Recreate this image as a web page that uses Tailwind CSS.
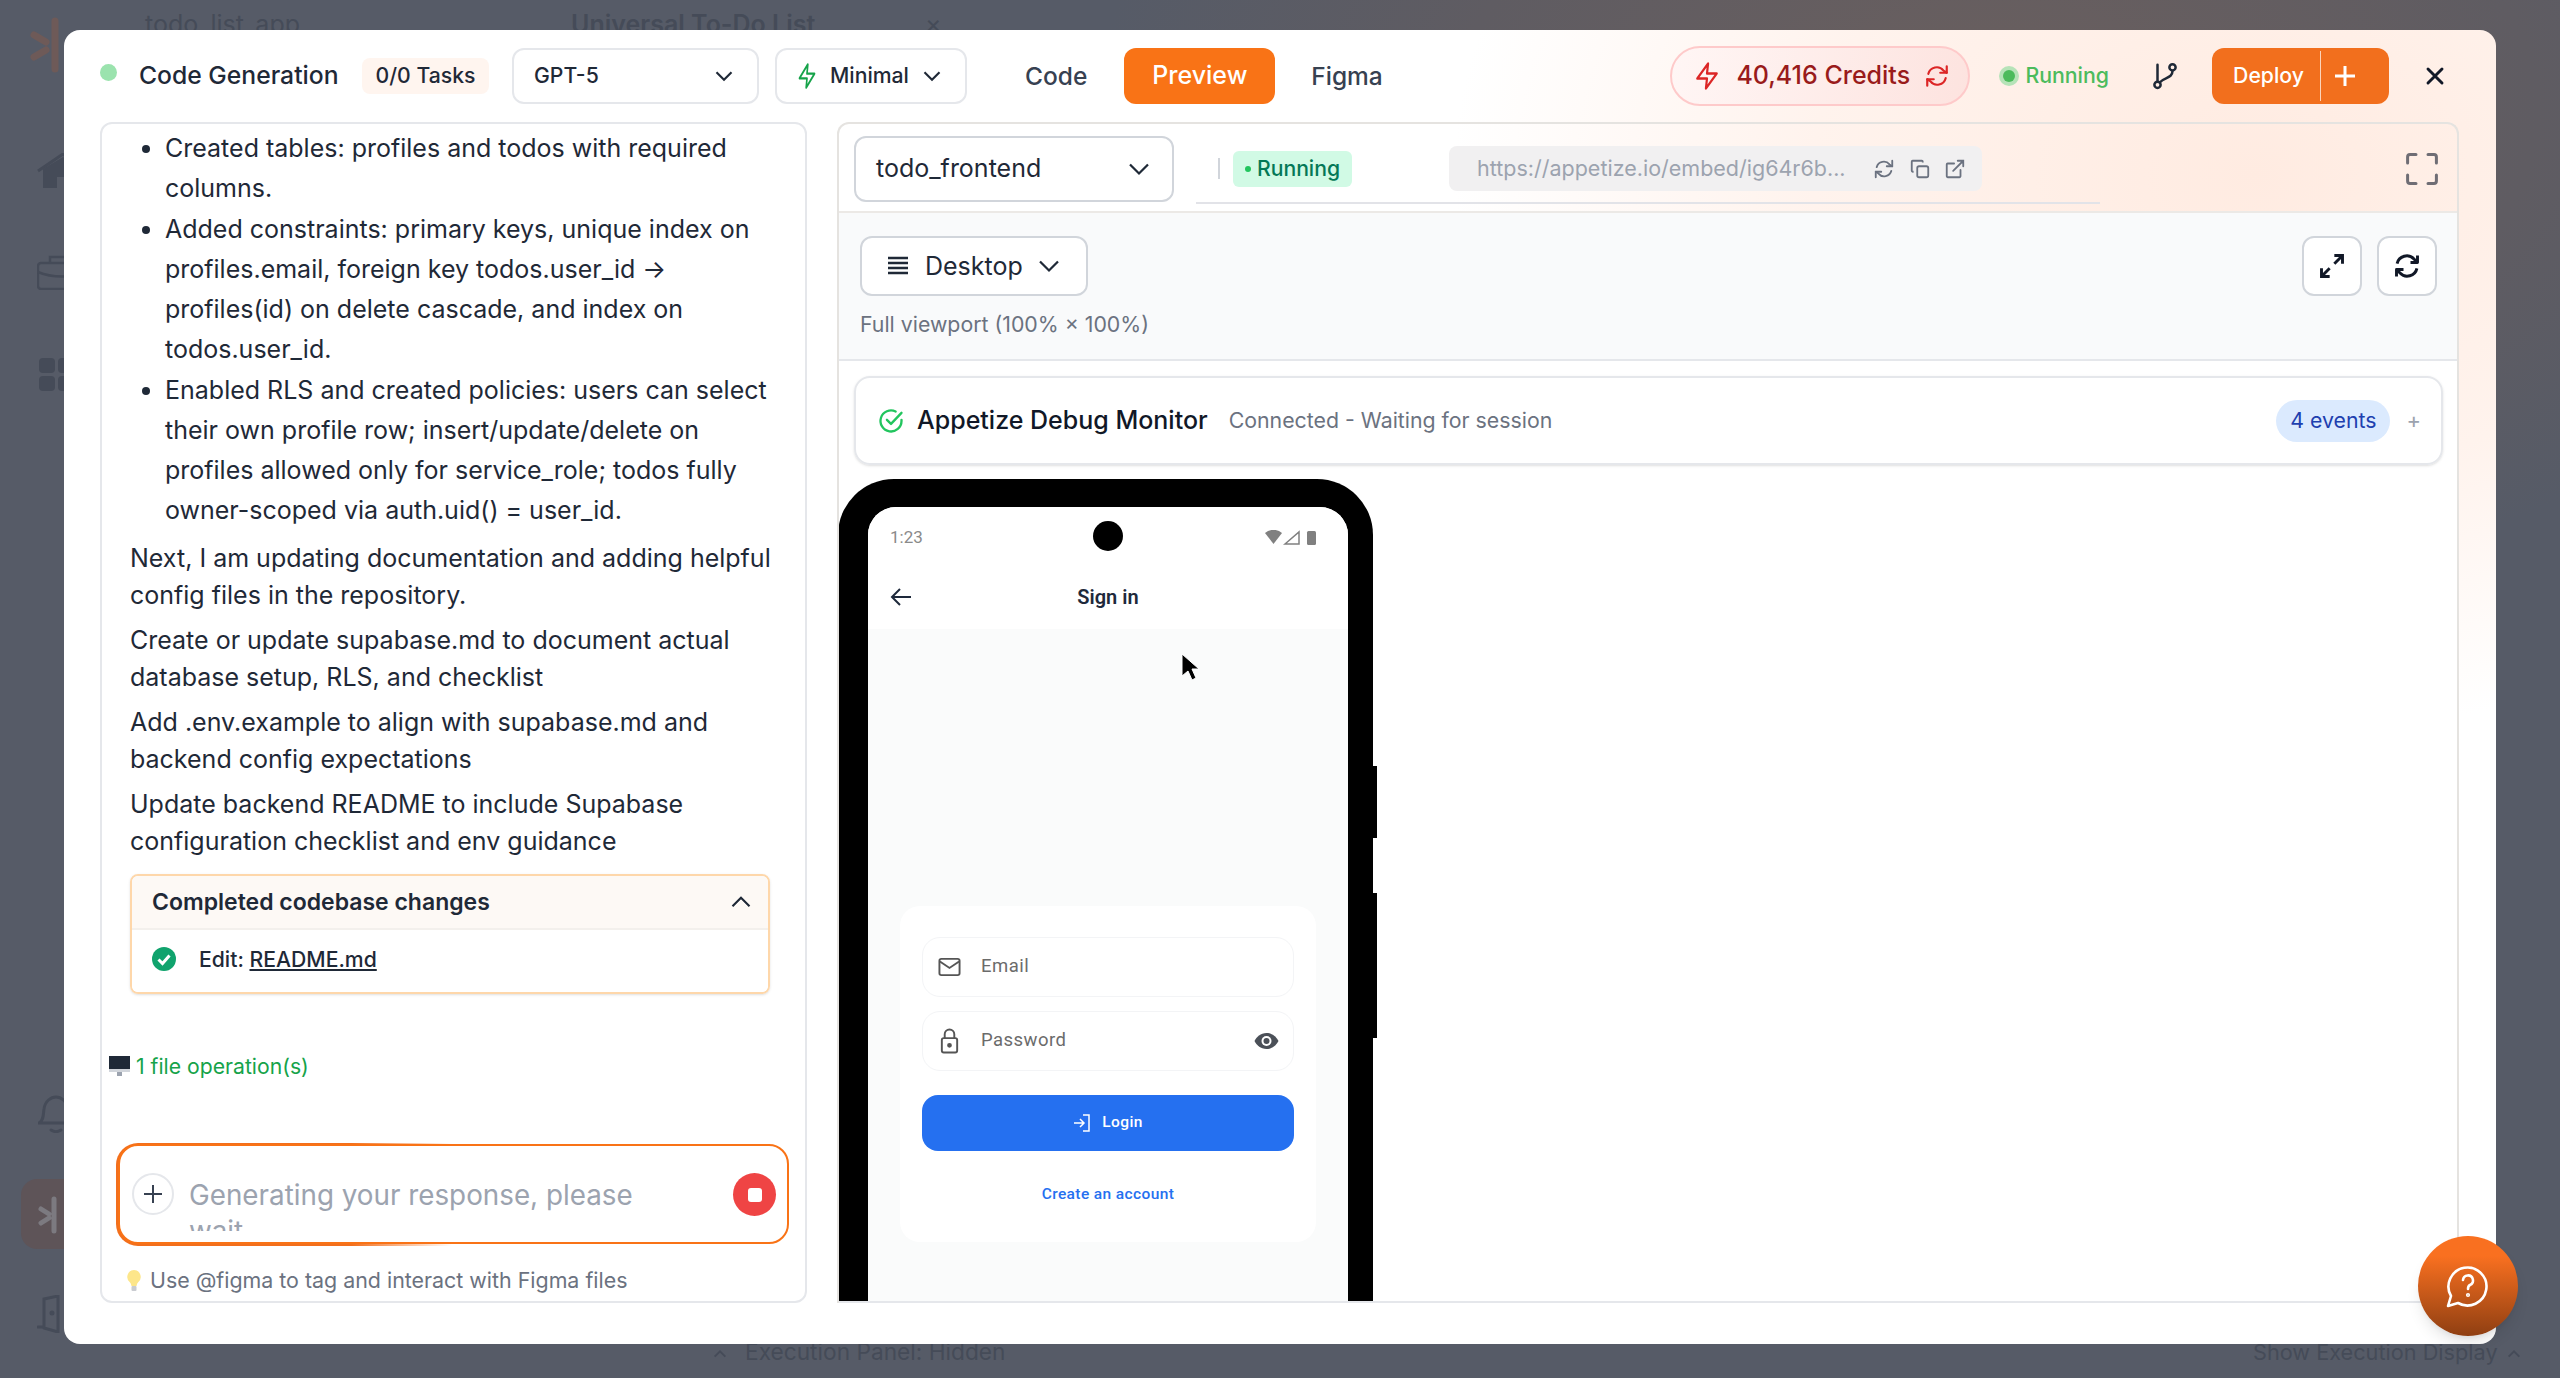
<!DOCTYPE html>
<html lang="en">
<head>
<meta charset="UTF-8">
<title>Code Generation</title>
<script src="https://cdn.jsdelivr.net/npm/@tailwindcss/browser@4"></script>
</head>
<body class="bg-[#565b67] font-['Inter',sans-serif] overflow-hidden">
<div class="relative h-[1378px] w-[2560px] overflow-hidden bg-[radial-gradient(ellipse_900px_500px_at_78%_8%,#6a5f5e_0%,#5f5c62_60%,#565b67_100%)]">

  <!-- dimmed page behind the modal -->
  <div class="absolute left-[145px] top-[6px] text-[25px] text-[#454b58]">todo_list_app</div>
  <div class="absolute left-[571px] top-[6px] text-[25px] font-semibold text-[#454b58]">Universal To-Do List</div>
  <div class="absolute left-[925px] top-[6px] text-[25px] text-[#454b58]">×</div>
  <svg class="absolute left-[30px] top-[17px] h-[56px] w-[50px]" viewBox="0 0 50 56" fill="none" stroke="#6e5a58" stroke-width="7" stroke-linecap="round"><path d="M25 4v48M4 18l12 7M4 40l12-7"/></svg>
  <svg class="absolute left-[37px] top-[153px] h-[35px] w-[50px]" viewBox="0 0 50 35" fill="none"><path d="M1 18L26 1l23 17" stroke="#454b58" stroke-width="3"/><path d="M6 16L26 4l18 12v19H31V24H20v11H6z" fill="#454b58"/></svg>
  <svg class="absolute left-[37px] top-[255px] h-[35px] w-[50px]" viewBox="0 0 50 35" fill="none" stroke="#454b58" stroke-width="2.5"><rect x="1" y="8" width="48" height="26" rx="3"/><path d="M13 8V2h24v6M1 17c14 6 34 6 48 0"/></svg>
  <div class="absolute left-[39px] top-[358px] grid w-[34px] grid-cols-2 gap-[3px]">
    <div class="h-[15px] rounded-sm bg-[#454b58]"></div><div class="h-[15px] rounded-sm bg-[#454b58]"></div><div class="h-[15px] rounded-sm bg-[#454b58]"></div><div class="h-[15px] rounded-sm bg-[#454b58]"></div>
  </div>
  <svg class="absolute left-[38px] top-[1095px] h-[38px] w-[40px]" viewBox="0 0 40 38" fill="none" stroke="#454b58" stroke-width="3" stroke-linecap="round"><path d="M1 28c5-3 4-8 5-14C7 6 13 2 18 2s11 4 12 12c1 6 0 11 5 14z"/><path d="M13 35c3 2 7 2 10 0"/></svg>
  <div class="absolute left-[21px] top-[1179px] h-[70px] w-[43px] rounded-l-2xl bg-[#5e5458]">
    <svg class="absolute left-[17px] top-[17px] h-[38px] w-[26px]" viewBox="0 0 26 38" fill="none" stroke="#7c7a80" stroke-width="5" stroke-linecap="round"><path d="M16 3v32M3 13l8 5M3 27l8-5"/></svg>
  </div>
  <svg class="absolute left-[37px] top-[1295px] h-[38px] w-[30px]" viewBox="0 0 30 38" fill="none" stroke="#454b58" stroke-width="3" stroke-linecap="round"><path d="M1 32h6V4l14-3v36L7 33"/><circle cx="15" cy="18" r="1" fill="#454b58"/></svg>
  <svg class="absolute left-[712px] top-[1346px] h-[16px] w-[16px]" viewBox="0 0 24 24" fill="none" stroke="#454b58" stroke-width="3"><path d="M4 16l8-8 8 8"/></svg>
  <div class="absolute bottom-[9px] left-[745px] text-[22.7px] text-[#454b58]">Execution Panel: Hidden</div>
  <div class="absolute bottom-[9px] left-[2253px] text-[21.7px] text-[#454b58]">Show Execution Display</div>
  <svg class="absolute left-[2506px] top-[1346px] h-[16px] w-[16px]" viewBox="0 0 24 24" fill="none" stroke="#454b58" stroke-width="3"><path d="M4 16l8-8 8 8"/></svg>

  <!-- modal -->
  <div class="absolute left-[64px] top-[30px] flex h-[1314px] w-[2432px] flex-col rounded-2xl bg-[radial-gradient(ellipse_800px_560px_at_90%_11%,#ffebe1_0%,#fff3ed_55%,#ffffff_100%)] pl-[36px] pr-[37px]">

    <!-- top bar -->
    <div class="flex h-[92px] shrink-0 items-center text-[#1f2937]">
      <span class="mr-[22px] mb-[8px] h-[17px] w-[17px] rounded-full bg-[#9be3ae]"></span>
      <span class="w-[201px] text-[24.7px] font-medium whitespace-nowrap">Code Generation</span>
      <span class="ml-[22px] flex h-[36px] w-[127px] items-center justify-center rounded-lg bg-[#fff5ef] text-[21.2px] font-medium">0/0 Tasks</span>
      <div class="ml-[23px] flex h-[56px] w-[247px] items-center justify-between rounded-xl border-2 border-[#e5e7eb] bg-white pl-[20px] pr-[18px] text-[21.2px] font-medium">GPT-5
        <svg class="h-[30px] w-[30px]" viewBox="0 0 24 24" fill="none" stroke="#1f2937" stroke-width="1.7"><path d="M6 9l6 6 6-6"/></svg>
      </div>
      <div class="ml-[16px] flex h-[56px] w-[192px] items-center rounded-xl border-2 border-[#e5e7eb] bg-white pl-[20px] text-[21.2px] font-medium">
        <svg class="mr-[13px] h-[28px] w-[20px]" viewBox="0 0 24 24" preserveAspectRatio="none" fill="none" stroke="#16a34a" stroke-width="2" stroke-linejoin="round"><path d="M13 2L3 14h9l-1 8 10-12h-9l1-8z"/></svg>
        Minimal
        <svg class="ml-[8px] h-[30px] w-[30px]" viewBox="0 0 24 24" fill="none" stroke="#1f2937" stroke-width="1.7"><path d="M6 9l6 6 6-6"/></svg>
      </div>
      <span class="ml-[58px] text-[24.5px] font-medium text-[#374151]">Code</span>
      <span class="ml-[37px] flex h-[56px] w-[151px] items-center justify-center rounded-xl bg-[#f97316] text-[25px] font-medium text-white">Preview</span>
      <span class="ml-[36px] text-[24.5px] font-medium text-[#374151]">Figma</span>
      <div class="ml-auto flex h-[60px] w-[300px] items-center rounded-full border-2 border-[#fecaca] bg-[linear-gradient(100deg,#fff6f5,#fde3df)] pl-[22px] text-[25px] font-medium text-[#991b1b]">
        <svg class="h-[30px] w-[26px]" viewBox="0 0 24 24" preserveAspectRatio="none" fill="none" stroke="#dc2626" stroke-width="2" stroke-linejoin="round"><path d="M13 2L3 14h9l-1 8 10-12h-9l1-8z"/></svg>
        <span class="ml-[16px] whitespace-nowrap">40,416 Credits</span>
        <svg class="ml-[14px] h-[26px] w-[26px]" viewBox="0 0 24 24" fill="none" stroke="#dc2626" stroke-width="2" stroke-linecap="round" stroke-linejoin="round"><path d="M21 3v6h-6M3 21v-6h6"/><path d="M4 10a8 8 0 0 1 14-3l3 2M20 14a8 8 0 0 1-14 3l-3-2"/></svg>
      </div>
      <span class="ml-[29px] flex h-[20px] w-[20px] items-center justify-center rounded-full bg-[#b6e3b8]"><span class="h-[12px] w-[12px] rounded-full bg-[#4cbb5c]"></span></span>
      <span class="ml-[6px] text-[21.3px] font-medium text-[#4cbb5c]">Running</span>
      <svg class="ml-[41px] h-[30px] w-[30px]" viewBox="0 0 24 24" fill="none" stroke="#1f2937" stroke-width="2" stroke-linecap="round"><circle cx="6" cy="19" r="2.5"/><circle cx="18" cy="5" r="2.5"/><path d="M6 16V3M18 8c0 6-7 5-10 9"/></svg>
      <div class="ml-[32px] flex h-[56px] w-[177px] items-center rounded-xl bg-[#f26f1d] text-white">
        <span class="w-[108px] pl-[5px] text-center text-[21.2px] font-medium">Deploy</span>
        <span class="h-[50px] w-px bg-white/70"></span>
        <span class="pl-[13px]"><svg class="h-[22px] w-[22px]" viewBox="0 0 22 22" stroke="#fff" stroke-width="3"><path d="M11 1v20M1 11h20"/></svg></span>
      </div>
      <svg class="ml-[32px] mr-[10px] h-[28px] w-[28px]" viewBox="0 0 24 24" fill="none" stroke="#111827" stroke-width="2.5" stroke-linecap="round"><path d="M6 6l12 12M18 6L6 18"/></svg>
    </div>

    <!-- two panels -->
    <div class="flex min-h-0 flex-1 gap-[30px] pb-[41px]">

      <!-- chat -->
      <div class="flex w-[707px] shrink-0 flex-col rounded-xl border-2 border-[#e5e7eb] bg-white pl-[28px] text-[25px] leading-[40px] text-[#1f2937]">
        <ul class="mt-[4px] list-disc pl-[35px] pr-[30px] marker:text-[#1f2937]">
          <li>Created tables: profiles and todos with required columns.</li>
          <li class="mt-[1px]">Added constraints: primary keys, unique index on profiles.email, foreign key todos.user_id → profiles(id) on delete cascade, and index on todos.user_id.</li>
          <li class="mt-[1px]">Enabled RLS and created policies: users can select their own profile row; insert/update/delete on profiles allowed only for service_role; todos fully owner-scoped via auth.uid() = user_id.</li>
        </ul>
        <p class="mt-[10px] pr-[30px] leading-[37px]">Next, I am updating documentation and adding helpful config files in the repository.</p>
        <p class="mt-[8px] pr-[30px] leading-[37px]">Create or update supabase.md to document actual database setup, RLS, and checklist</p>
        <p class="mt-[8px] pr-[30px] leading-[37px]">Add .env.example to align with supabase.md and backend config expectations</p>
        <p class="mt-[8px] pr-[30px] leading-[37px]">Update backend README to include Supabase configuration checklist and env guidance</p>

        <div class="mt-[14px] mr-[35px] overflow-hidden rounded-lg border-2 border-[#fed7aa] shadow-sm">
          <div class="flex h-[54px] items-center justify-between border-b-2 border-[#f3f0ec] bg-[#fdf9f5] pl-[20px] pr-[10px] text-[23px] font-semibold">Completed codebase changes
            <svg class="h-[34px] w-[34px]" viewBox="0 0 24 24" fill="none" stroke="#1f2937" stroke-width="1.5"><path d="M6 15l6-6 6 6"/></svg>
          </div>
          <div class="flex h-[62px] items-center bg-white px-[20px] pb-[5px] text-[21.2px] font-medium">
            <svg class="mr-[23px] h-[24px] w-[24px]" viewBox="0 0 24 24"><circle cx="12" cy="12" r="12" fill="#10a36d"/><path d="M6.5 12.5l4 4 7-8" fill="none" stroke="#fff" stroke-width="3"/></svg>
            Edit:&nbsp;<span class="underline underline-offset-2">README.md</span>
          </div>
        </div>

        <div class="mt-[56px] -ml-[21px] flex items-center text-[21.2px] leading-[32px] text-[#16a34a]">
          <svg class="mr-[6px] h-[20px] w-[21px]" viewBox="0 0 21 20"><rect width="21" height="13" fill="#1f2937"/><rect y="13" width="21" height="3" fill="#d1d5db"/><rect x="8" y="16" width="5" height="4" fill="#9ca3af"/></svg>
          1 file operation(s)
        </div>

        <div class="relative mt-[62px] -ml-[12px] mr-[16px] h-[100px]">
          <span class="absolute -bottom-[2px] -left-[2px] -top-[1px] w-[50%] rounded-l-[22px] bg-[linear-gradient(90deg,#f26f1d_70%,#f26f1d00)]"></span>
          <div class="relative flex h-[100px] rounded-[20px] border-2 border-[#f97316] bg-white">
            <span class="ml-[12px] mt-[27px] flex h-[42px] w-[42px] shrink-0 items-center justify-center rounded-full border-2 border-[#e5e7eb] text-[#374151]">
              <svg class="h-[24px] w-[24px]" viewBox="0 0 24 24" fill="none" stroke="currentColor" stroke-width="2"><path d="M12 3v18M3 12h18"/></svg>
            </span>
            <div class="ml-[15px] mt-[31px] h-[54px] w-[460px] overflow-hidden text-[27.8px] leading-[36px] text-[#9ca3af]">Generating your response, please wait</div>
            <span class="absolute right-[11px] top-[27px] flex h-[43px] w-[43px] items-center justify-center rounded-full bg-[#ef4444]"><span class="h-[14px] w-[14px] rounded-[3px] bg-white"></span></span>
          </div>
        </div>

        <div class="mt-[20px] -ml-[3px] flex items-center text-[21.4px] leading-[32px] text-[#6b7280]">
          <svg class="mr-[9px] h-[21px] w-[14px]" viewBox="0 0 14 21"><path d="M7 0a7 7 0 0 0-4 12.5c1 1 1 2 1.500 3.500h5c.5-1.500.5-2.500 1.500-3.500A7 7 0 0 0 7 0z" fill="#fde68a"/><rect x="4.500" y="16" width="5" height="5" rx="1" fill="#c9ccd1"/></svg>
          Use @figma to tag and interact with Figma files
        </div>
      </div>

      <!-- preview -->
      <div class="flex min-w-0 flex-1 flex-col overflow-hidden rounded-t-xl border-x-2 border-t-2 border-[#e5e3e0]">
        <div class="flex h-[89px] shrink-0 items-center border-b-2 border-[#ece9e6] pl-[15px] pr-[17px] pt-[2px]">
          <div class="flex h-[66px] w-[320px] shrink-0 items-center justify-between rounded-xl border-2 border-[#d1d5db] bg-white pl-[20px] pr-[15px] text-[25px] text-[#1f2937]">todo_frontend
            <svg class="h-[36px] w-[36px]" viewBox="0 0 24 24" fill="none" stroke="#1f2937" stroke-width="1.5"><path d="M6 9l6 6 6-6"/></svg>
          </div>
          <div class="relative flex h-full flex-1 items-center">
            <span class="ml-[44px] h-[21px] w-[2px] bg-[#d1d5db]"></span>
            <span class="ml-[13px] flex h-[36px] w-[119px] items-center justify-center gap-[6px] rounded-md bg-[#d1fae5] text-[21.2px] font-medium text-[#047857]"><span class="h-[6px] w-[6px] rounded-full bg-[#22c55e]"></span>Running</span>
            <div class="ml-[97px] flex h-[45px] w-[533px] items-center rounded-lg bg-[#f1f0f1] pl-[28px] text-[21.5px] text-[#9ca3af] whitespace-nowrap">https://appetize.io/embed/ig64r6b...
              <svg class="ml-[27px] h-[22px] w-[22px] shrink-0" viewBox="0 0 24 24" fill="none" stroke="#6b7280" stroke-width="2" stroke-linecap="round" stroke-linejoin="round"><path d="M21 3v6h-6M3 21v-6h6"/><path d="M4 10a8 8 0 0 1 14-3l3 2M20 14a8 8 0 0 1-14 3l-3-2"/></svg>
              <svg class="ml-[14px] h-[22px] w-[22px] shrink-0" viewBox="0 0 24 24" fill="none" stroke="#6b7280" stroke-width="2"><rect x="9" y="9" width="12" height="12" rx="2"/><path d="M5 15H4a1 1 0 0 1-1-1V4a1 1 0 0 1 1-1h10a1 1 0 0 1 1 1v1"/></svg>
              <svg class="ml-[13px] h-[22px] w-[22px] shrink-0" viewBox="0 0 24 24" fill="none" stroke="#6b7280" stroke-width="2" stroke-linecap="round"><path d="M18 13v7a1 1 0 0 1-1 1H4a1 1 0 0 1-1-1V7a1 1 0 0 1 1-1h7M15 3h6v6M10 14L21 3"/></svg>
            </div>
            <span class="absolute bottom-[7px] left-[22px] h-[2px] w-[904px] bg-[#e2e3e8]"></span>
            <svg class="ml-auto h-[36px] w-[36px]" viewBox="0 0 30 30" fill="none" stroke="#6f6d74" stroke-width="2.500" stroke-linecap="round" stroke-linejoin="round"><path d="M3 10V5a2 2 0 0 1 2-2h5M20 3h5a2 2 0 0 1 2 2v5M27 20v5a2 2 0 0 1-2 2h-5M10 27H5a2 2 0 0 1-2-2v-5"/></svg>
          </div>
        </div>

        <div class="flex h-[148px] shrink-0 justify-between border-b-2 border-[#e5e7eb] bg-[#f9fafb] pl-[21px] pr-[20px] pt-[23px]">
          <div>
            <div class="flex h-[60px] w-[228px] items-center rounded-xl border-2 border-[#d1d5db] bg-white pl-[24px] text-[25px] text-[#1f2937]">
              <svg class="mr-[15px] h-[20px] w-[24px]" viewBox="0 0 24 20" stroke="#1f2937" stroke-width="2.500"><path d="M2 2h20M2 7h20M2 12h20M2 17h20"/></svg>
              <span class="pt-[2px]">Desktop</span>
              <svg class="ml-[8px] h-[36px] w-[36px]" viewBox="0 0 24 24" fill="none" stroke="#1f2937" stroke-width="1.5"><path d="M6 9l6 6 6-6"/></svg>
            </div>
            <div class="mt-[13px] text-[21.3px] text-[#6b7280]">Full viewport (100% × 100%)</div>
          </div>
          <div class="flex gap-[15px]">
            <span class="flex h-[60px] w-[60px] items-center justify-center rounded-xl border-2 border-[#d1d5db] bg-white">
              <svg class="h-[28px] w-[28px]" viewBox="0 0 24 24" fill="none" stroke="#111827" stroke-width="2.500"><path d="M14 3h7v7M21 3l-7 7M10 21H3v-7M3 21l7-7"/></svg>
            </span>
            <span class="flex h-[60px] w-[60px] items-center justify-center rounded-xl border-2 border-[#d1d5db] bg-white">
              <svg class="h-[28px] w-[28px]" viewBox="0 0 24 24" fill="none" stroke="#111827" stroke-width="2.500" stroke-linejoin="round"><path d="M21 3v6h-6M3 21v-6h6"/><path d="M3.500 10A8.500 8.500 0 0 1 18 6l3 3M20.500 14A8.500 8.500 0 0 1 6 18l-3-3"/></svg>
            </span>
          </div>
        </div>

        <div class="flex min-h-0 flex-1 flex-col bg-white">
          <div class="ml-[15px] mr-[14px] mt-[15px] flex h-[89px] shrink-0 items-center rounded-2xl border-2 border-[#e5e7eb] pl-[21px] pr-[20px] shadow-sm">
            <svg class="h-[28px] w-[28px]" viewBox="0 0 24 24" fill="none" stroke="#22c55e" stroke-width="2" stroke-linecap="round" stroke-linejoin="round"><path d="M21 11v1a9 9 0 1 1-5-8.100"/><path d="M8.500 11l3.500 3.500L21 5"/></svg>
            <span class="ml-[12px] text-[25px] font-medium text-[#111827]">Appetize Debug Monitor</span>
            <span class="ml-[21px] text-[21.3px] text-[#6b7280]">Connected - Waiting for session</span>
            <span class="ml-auto flex h-[42px] w-[114px] items-center justify-center rounded-full bg-[#dbeafe] text-[21.3px] text-[#1e40af]">4 events</span>
            <span class="ml-[16px] text-[22px] text-[#9ca3af]">+</span>
          </div>

          <!-- phone -->
          <div class="mt-[14px] min-h-0 flex-1 overflow-hidden">
            <div class="relative -ml-[1px] h-[900px] w-[535px] rounded-t-[56px] bg-black pl-[30px] pr-[25px] pt-[28px]">
              <span class="absolute -right-[4px] top-[287px] h-[72px] w-[4px] bg-black"></span>
              <span class="absolute -right-[4px] top-[414px] h-[145px] w-[4px] bg-black"></span>
              <div class="flex h-[900px] flex-col overflow-hidden rounded-t-[28px] bg-[#fafbfb]">
                <div class="h-[122px] shrink-0 bg-white">
                  <div class="relative flex h-[58px] items-center justify-between pl-[22px] pr-[32px] pt-[3px] font-['Roboto',sans-serif] text-[17px] text-[#8a8a8a]">
                    1:23
                    <span class="absolute left-[225px] top-[14px] h-[30px] w-[30px] rounded-full bg-black"></span>
                    <svg class="h-[15px] w-[51px]" viewBox="0 0 51 15"><path d="M0 3a13 13 0 0 1 17 0l-8.500 11z" fill="#808080"/><path d="M20 14L34 2v12z" fill="none" stroke="#808080" stroke-width="1.500"/><rect x="42" y="1" width="9" height="14" rx="1.500" fill="#808080"/></svg>
                  </div>
                  <div class="relative flex h-[64px] items-center justify-center font-['Roboto',sans-serif] text-[20px] font-semibold text-[#1e293b]">
                    <svg class="absolute left-[21px] h-[24px] w-[24px]" viewBox="0 0 24 24" fill="none" stroke="#1e293b" stroke-width="2"><path d="M22 12H3M11 4l-8 8 8 8"/></svg>
                    Sign in
                  </div>
                </div>
                <div class="mx-[32px] mt-[277px] h-[336px] rounded-[20px] bg-white px-[22px] pt-[31px] font-['Roboto',sans-serif]">
                  <div class="flex h-[60px] items-center rounded-[18px] border border-[#f3f4f6] pl-[15px] text-[18.5px] tracking-wide text-[#6b6b6b]">
                    <svg class="mr-[20px] h-[18px] w-[23px]" viewBox="0 0 24 20" preserveAspectRatio="none" fill="none" stroke="#555" stroke-width="2"><rect x="1.500" y="1" width="21" height="18" rx="2"/><path d="M2 4l10 7 10-7"/></svg>
                    Email
                  </div>
                  <div class="mt-[14px] flex h-[60px] items-center rounded-[18px] border border-[#f3f4f6] pl-[15px] pr-[14px] text-[18.5px] tracking-wide text-[#6b6b6b]">
                    <svg class="mr-[20px] h-[26px] w-[23px]" viewBox="0 0 24 26" fill="none" stroke="#555" stroke-width="2"><rect x="4" y="10" width="16" height="15" rx="2"/><path d="M7 10V6a5 5 0 0 1 10 0v4"/><circle cx="12" cy="17.500" r="1.500" fill="#555"/></svg>
                    Password
                    <svg class="ml-auto h-[18px] w-[25px]" viewBox="0 0 24 18"><path d="M12 1C6 1 2 5 0 9c2 4 6 8 12 8s10-4 12-8c-2-4-6-8-12-8z" fill="#4b5058"/><circle cx="12" cy="9" r="5" fill="#fff"/><circle cx="12" cy="9" r="3" fill="#4b5058"/></svg>
                  </div>
                  <div class="mt-[24px] flex h-[56px] items-center justify-center gap-[11px] rounded-[16px] bg-[#2570f0] text-[15.5px] font-medium tracking-wide text-white">
                    <svg class="h-[18px] w-[18px]" viewBox="0 0 18 18" fill="none" stroke="#fff" stroke-width="1.500"><path d="M1 9h10M7 5l4 4-4 4M10 1h6v16h-6"/></svg>
                    Login
                  </div>
                  <div class="mt-[32px] text-center text-[15.500px] font-medium tracking-wide text-[#2570f0]">Create an account</div>
                </div>
              </div>
              <svg class="absolute left-[342px] top-[174px] h-[30px] w-[20px]" viewBox="0 0 20 30"><path d="M2 1v22l6-5 4 9 4-2-4-9h7z" fill="#000" stroke="#fff" stroke-width="1"/></svg>
            </div>
          </div>
        </div>
        <div class="h-[2px] shrink-0 bg-[#e5e7eb]"></div>
      </div>
    </div>
  </div>

  <!-- help button -->
  <div class="absolute left-[2418px] top-[1236px] flex h-[100px] w-[100px] items-center justify-center rounded-full bg-[linear-gradient(180deg,#f97020_20%,#8f3f12_100%)] shadow-lg">
    <svg class="h-[44px] w-[44px]" viewBox="0 0 44 44" fill="none" stroke="#fff" stroke-width="2.600" stroke-linecap="round" stroke-linejoin="round"><path d="M2 42l3-10a19 19 0 1 1 7 7z"/><path d="M17 16a5 5 0 1 1 7 5c-2 1-2 2-2 4"/><circle cx="22" cy="31" r="0.800"/></svg>
  </div>
</div>
</body>
</html>
